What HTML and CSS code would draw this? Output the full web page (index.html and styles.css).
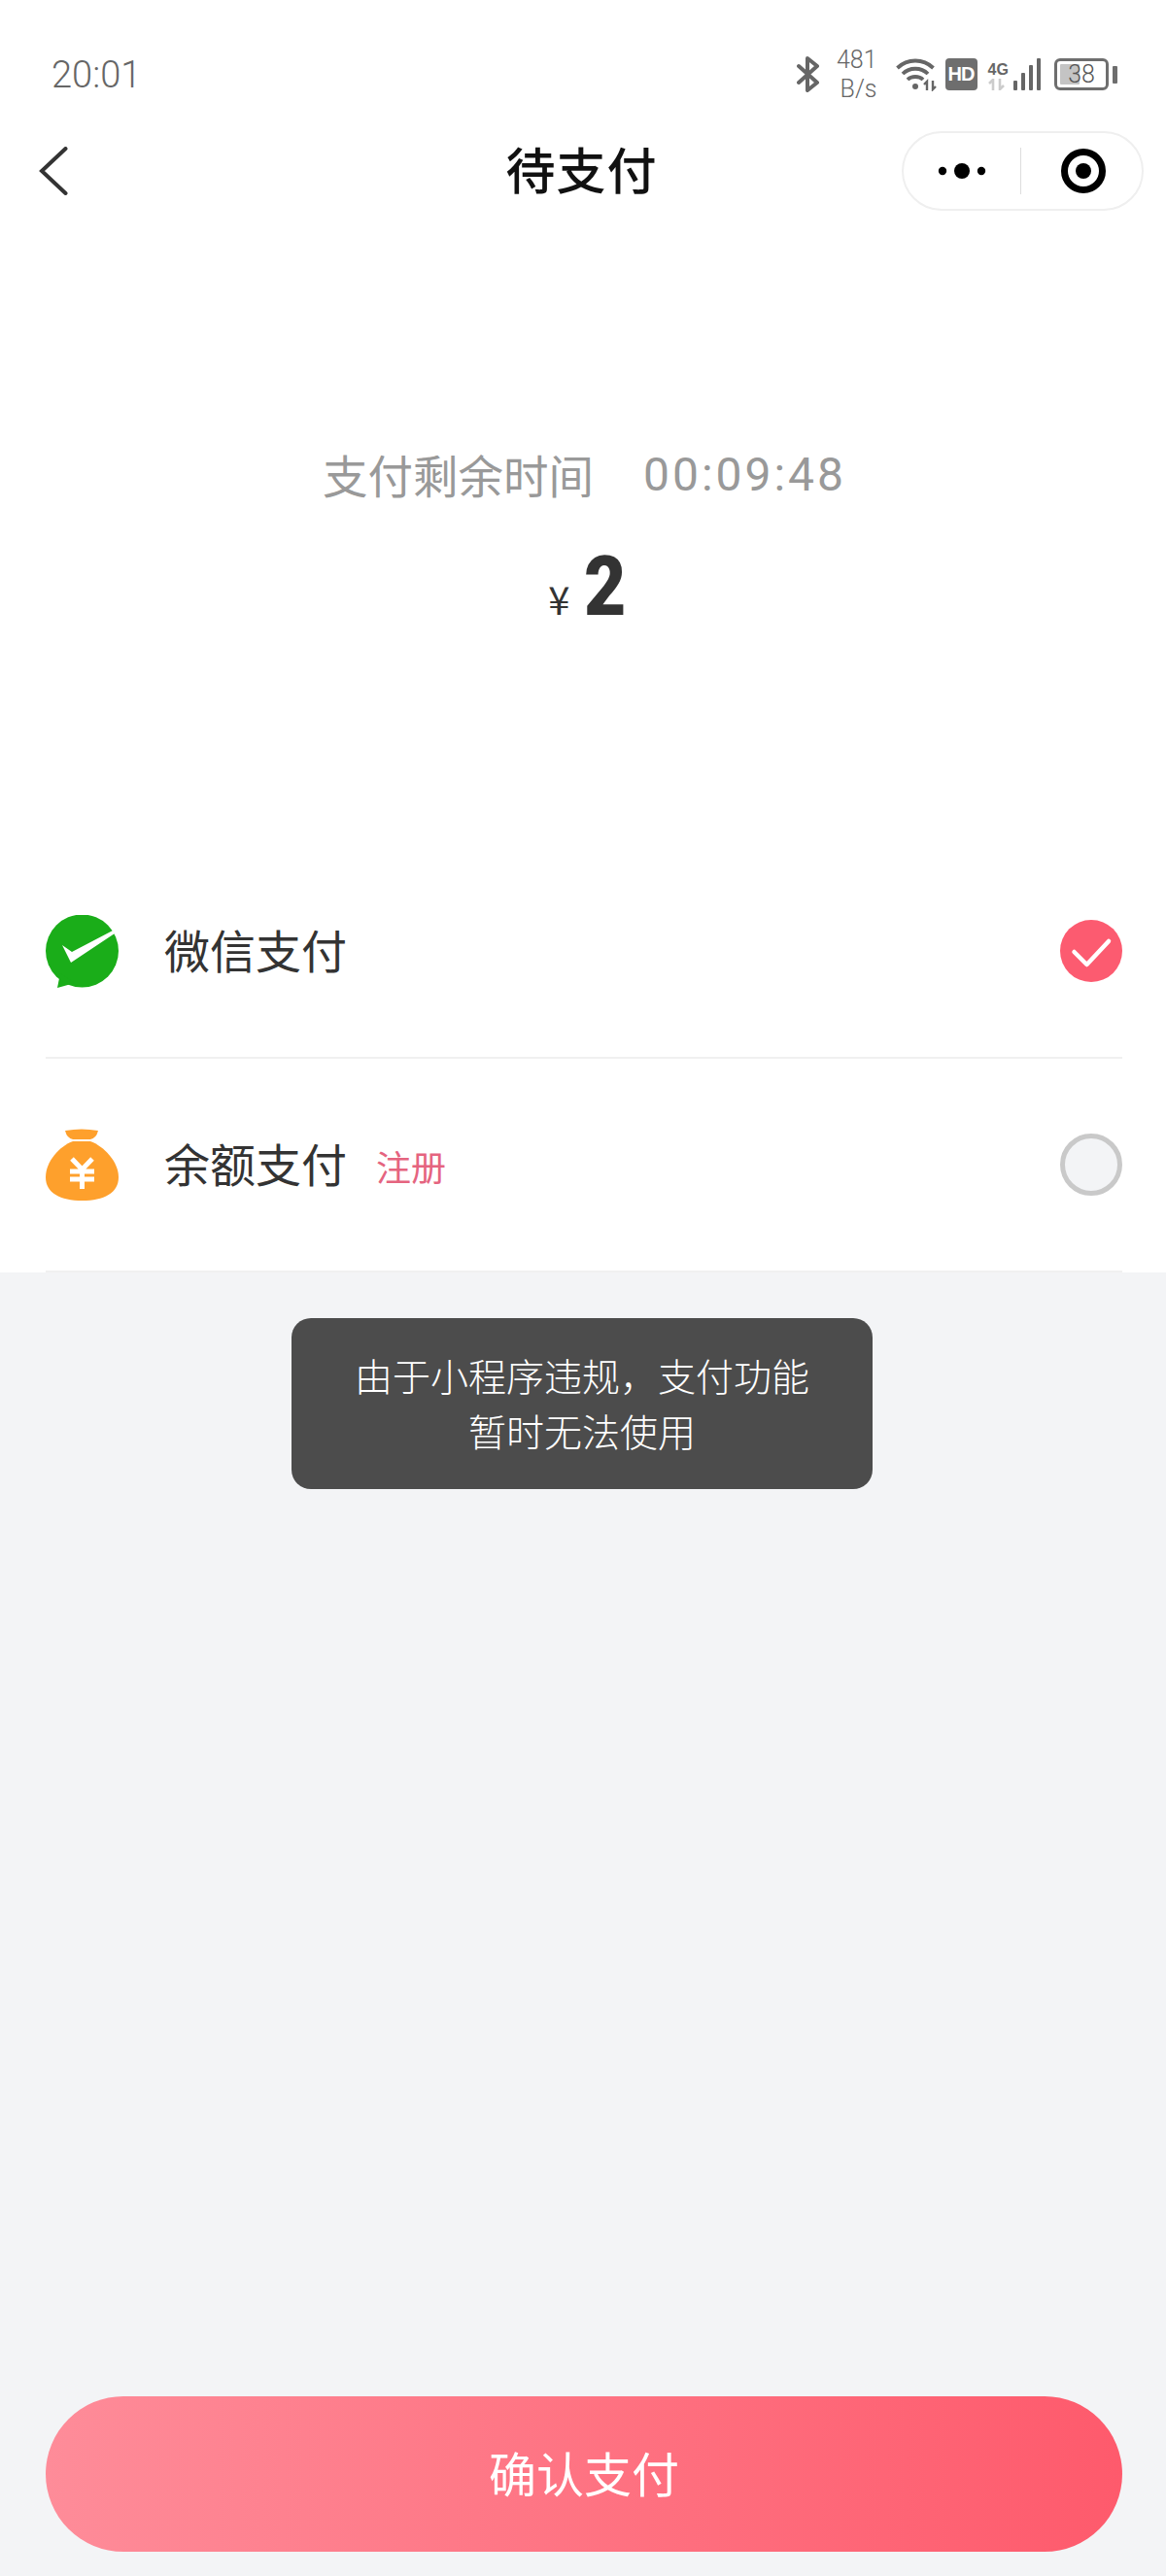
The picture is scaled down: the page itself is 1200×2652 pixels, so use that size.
FILE: index.html
```html
<!DOCTYPE html>
<html lang="zh-CN">
<head>
  <meta charset="UTF-8">
  <meta name="viewport" content="width=device-width, initial-scale=1">
  <title>待支付</title>
  <link rel="stylesheet" href="styles.css">
</head>
<body>

<div class="page">
  <div class="top-area">
    <div class="statusbar">
      <span class="time">20:01</span>
      <div class="status-icons">
        <svg class="ic-bt" width="24" height="37" viewBox="0 0 24 37"><path d="M2 10 L21 27 L11 35 V2 L21 10 L2 27" fill="none" stroke="#666" stroke-width="4" stroke-linejoin="round" stroke-linecap="round"/></svg>
        <div class="speed"><span>481</span><span>B/s</span></div>
        <svg class="ic-wifi" width="42" height="34" viewBox="0 0 42 34">
          <path d="M1.500 10 C12 0 28 0 38.500 10" fill="none" stroke="#666" stroke-width="3.800"/>
          <path d="M7 16 C14 9 26 9 33 16" fill="none" stroke="#666" stroke-width="3.800"/>
          <path d="M12 22 C16 18 24 18 28 22" fill="none" stroke="#666" stroke-width="3.800"/>
          <circle cx="20" cy="29" r="3" fill="#666"/>
          <path d="M32 33 V24 L29 27 M38 23 V32 L41 29" fill="none" stroke="#666" stroke-width="2.400"/>
        </svg>
        <span class="hd">HD</span>
        <div class="signal">
          <div class="net">
            <span class="net-4g">4G</span>
            <svg width="18" height="12" viewBox="0 0 18 12"><path d="M5 12 V1 L1 5 M12 0 V11 L16 7" fill="none" stroke="#ccc" stroke-width="2.600"/></svg>
          </div>
          <div class="bars">
            <i class="b1"></i><i class="b2"></i><i class="b3"></i><i class="b4"></i>
          </div>
        </div>
        <div class="battery">
          <div class="battery-body"><div class="battery-fill"></div><span>38</span></div>
          <div class="battery-nub"></div>
        </div>
      </div>
    </div>

    <div class="navbar">
      <svg class="back" width="30" height="50" viewBox="0 0 30 50"><path d="M27.500 2 L3 25 L27.500 48" fill="none" stroke="#333" stroke-width="4" stroke-linecap="round"/></svg>
      <h1 class="nav-title">待支付</h1>
      <div class="capsule">
        <div class="capsule-btn">
          <svg width="50" height="18" viewBox="0 0 50 18"><circle cx="5" cy="9" r="4.200"/><circle cx="25" cy="9" r="8"/><circle cx="45" cy="9" r="4.200"/></svg>
        </div>
        <div class="capsule-line"></div>
        <div class="capsule-btn capsule-target">
          <svg width="48" height="48" viewBox="0 0 48 48"><circle cx="24" cy="24" r="19.500" fill="none" stroke="#000" stroke-width="7"/><circle cx="24" cy="24" r="8"/></svg>
        </div>
      </div>
    </div>

    <div class="countdown">
      <span class="countdown-label">支付剩余时间</span>
      <span class="countdown-time">00:09:48</span>
    </div>
    <div class="amount"><span class="yen">¥</span><span class="price">2</span></div>

    <div class="pay-list">
      <div class="pay-row">
        <svg class="pay-icon" width="75" height="75" viewBox="0 0 75 75">
          <circle cx="37.500" cy="37" r="37.500" fill="#1aad19"/>
          <path d="M15 60 L12 75 L30 70 Z" fill="#1aad19"/>
          <path d="M17 31 L27 38 L69 16 L71 19 L26 49 Z" fill="#fff"/>
        </svg>
        <span class="pay-name">微信支付</span>
        <svg class="check" width="64" height="64" viewBox="0 0 64 64"><circle cx="32" cy="32" r="32" fill="#fc5b70"/><path d="M14.500 33 L27.500 46 L50 22" fill="none" stroke="#fff" stroke-width="4.500" stroke-linecap="round" stroke-linejoin="round"/></svg>
      </div>
      <div class="pay-row">
        <svg class="pay-icon" width="75" height="75" viewBox="0 0 75 75">
          <path d="M20 2 Q37 -1 54 2 Q52 10 46 11 H28 Q22 10 20 2 Z" fill="#fea02c"/>
          <path d="M28 13 H46 C60 18 75 34 75 50 C75 66 60 74 37.500 74 C15 74 0 66 0 50 C0 34 14 18 28 13 Z" fill="#fea02c"/>
          <path d="M27 31 L37.500 42 L48 31 M25 44 H50 M25 52 H50 M37.500 42 V62" fill="none" stroke="#fff" stroke-width="5"/>
        </svg>
        <span class="pay-name">余额支付</span>
        <span class="register">注册</span>
        <span class="radio"></span>
      </div>
    </div>
  </div>

  <div class="bottom-bar">
    <button class="confirm">确认支付</button>
  </div>

  <div class="toast">由于小程序违规，支付功能<br>暂时无法使用</div>
</div>

</body>
</html>
```

FILE: styles.css
```css
* { box-sizing: border-box; }
body {
  margin: 0;
  font-family: "Noto Sans CJK SC", "Noto Sans", sans-serif;
  color: #333;
  background-color: #f3f4f6;
}
.page {
  position: relative;
  display: flex;
  flex-direction: column;
  height: 2652px;
  overflow: hidden;
}
.top-area {
  height: 1310px;
  background-color: white;
}

.statusbar {
  display: flex;
  justify-content: space-between;
  align-items: center;
  height: 135px;
  padding: 18px 50px 0 53px;
}
.time {
  font-family: Roboto, sans-serif;
  font-weight: 300;
  font-size: 38px;
  color: #666;
}
.status-icons {
  display: flex;
  align-items: center;
}
.speed {
  display: flex;
  flex-direction: column;
  align-items: flex-end;
  width: 42px;
  margin-left: 17px;
  font-family: Roboto, sans-serif;
  font-weight: 300;
  font-size: 25px;
  line-height: 30px;
  color: #666;
}
.ic-wifi { margin-left: 19px; }
.hd {
  width: 33px;
  height: 33px;
  margin-left: 9px;
  border-radius: 4px;
  background-color: #6e6e6e;
  color: white;
  font-family: "Liberation Sans", sans-serif;
  font-weight: bold;
  font-size: 20px;
  line-height: 33px;
  text-align: center;
  letter-spacing: -1px;
}
.signal {
  display: flex;
  align-items: flex-end;
  height: 33px;
  margin-left: 11px;
}
.net {
  display: flex;
  flex-direction: column;
  width: 24px;
}
.net-4g {
  font-family: "Liberation Sans", sans-serif;
  font-weight: bold;
  font-size: 16px;
  line-height: 19px;
  color: #666;
}
.bars {
  display: flex;
  align-items: flex-end;
  gap: 3.500px;
  margin-left: 2px;
}
.bars i {
  display: block;
  width: 4.500px;
  background-color: #666;
  border-radius: 1px;
}
.b1 { height: 10px; }
.b2 { height: 18px; }
.b3 { height: 26px; }
.b4 { height: 33px; }
.battery {
  display: flex;
  align-items: center;
  margin-left: 14px;
}
.battery-body {
  position: relative;
  width: 56px;
  height: 33px;
  border: 3px solid #6e6e6e;
  border-radius: 6px;
  font-family: Roboto, sans-serif;
  font-weight: 300;
  font-size: 25px;
  line-height: 27px;
  text-align: center;
  color: #555;
}
.battery-fill {
  position: absolute;
  left: 3px;
  top: 3px;
  bottom: 3px;
  width: 20px;
  background-color: #c4c4c4;
  border-radius: 1px;
}
.battery-body span { position: relative; }
.battery-nub {
  width: 5px;
  height: 18px;
  margin-left: 4px;
  background-color: #6e6e6e;
  border-radius: 1px;
}

.navbar {
  position: relative;
  display: flex;
  justify-content: space-between;
  align-items: center;
  height: 82px;
  padding: 0 23px 0 40px;
}
.back { display: block; }
.nav-title {
  position: absolute;
  left: 0;
  right: 0;
  margin: 0;
  padding: 0 3px 6px 0;
  font-size: 51px;
  font-weight: 500;
  text-align: center;
  color: #111;
  letter-spacing: 1px;
}
.capsule {
  display: flex;
  align-items: center;
  width: 249px;
  height: 82px;
  border: 2px solid #efefef;
  border-radius: 41px;
  background-color: white;
}
.capsule-btn {
  flex: 1;
  display: flex;
  justify-content: center;
  align-items: center;
}
.capsule-target { padding-left: 5px; }
.capsule-line {
  width: 1px;
  height: 48px;
  background-color: #dddddd;
}

.countdown {
  display: flex;
  justify-content: center;
  align-items: center;
  gap: 51px;
  margin-top: 239px;
  padding-left: 3px;
  color: #999;
  line-height: 60px;
}
.countdown-label { font-size: 46.500px; }
.countdown-time {
  padding-top: 3px;
  font-family: Roboto, sans-serif;
  font-size: 48px;
  letter-spacing: 3px;
}
.amount {
  display: flex;
  justify-content: center;
  align-items: baseline;
  gap: 12px;
  height: 92px;
  margin-top: 39px;
  padding-left: 12px;
}
.yen {
  font-size: 40px;
  line-height: 92px;
}
.price {
  font-family: Roboto, sans-serif;
  font-weight: 900;
  font-size: 85px;
  line-height: 92px;
  transform: scaleX(0.88);
}

.pay-list {
  margin: 0 45px 0 47px;
  padding-top: 220px;
}
.pay-row {
  display: flex;
  align-items: center;
  height: 220px;
  border-bottom: 2px solid #f0f0f0;
}
.pay-icon { display: block; flex-shrink: 0; }
.pay-name {
  margin-left: 47px;
  padding-bottom: 6px;
  font-size: 47px;
  color: #333;
}
.register {
  margin-left: 30px;
  padding-top: 2px;
  font-size: 36px;
  color: #e5647f;
}
.check, .radio { margin-left: auto; }
.radio {
  width: 64px;
  height: 64px;
  border: 5px solid #c9c9c9;
  border-radius: 50%;
  background-color: #f3f4f6;
}

.bottom-bar {
  margin-top: auto;
  padding: 0 45px 25px 47px;
}
.confirm {
  display: block;
  width: 100%;
  height: 160px;
  padding-bottom: 6px;
  border: none;
  border-radius: 80px;
  background: linear-gradient(to right, #fe8c99, #fe5a6c);
  color: white;
  font-family: inherit;
  font-size: 49px;
}

.toast {
  position: absolute;
  left: 300px;
  top: 1357px;
  width: 598px;
  height: 176px;
  padding-top: 30px;
  border-radius: 20px;
  background-color: #4c4c4c;
  color: white;
  font-size: 39px;
  font-weight: 300;
  line-height: 57px;
  text-align: center;
}
```
